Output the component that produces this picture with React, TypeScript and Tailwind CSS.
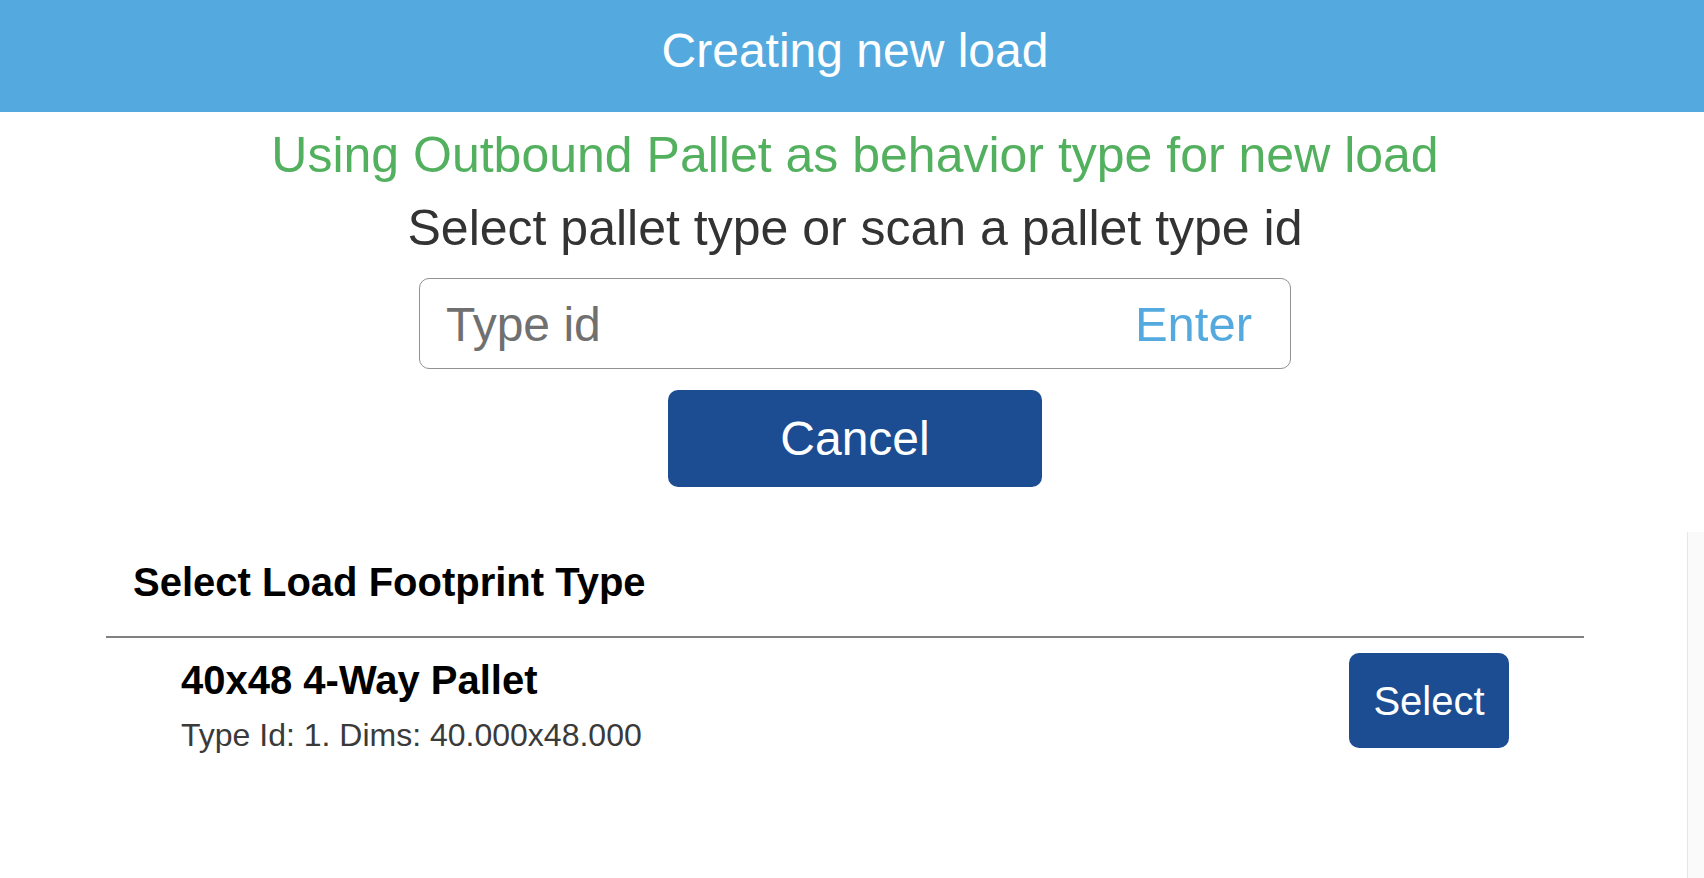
import React from "react";

export default function App() {
  return (
    <div
      className="w-[1704px] h-[878px] bg-white overflow-hidden flex flex-col"
      style={{ fontFamily: '"Liberation Sans", Arial, Helvetica, sans-serif' }}
    >
      <header className="h-[112px] shrink-0 bg-[#54aadf] pl-[6px] pt-[23px]">
        <h1 className="text-center text-white text-[48px] leading-[56px] font-normal">
          Creating new load
        </h1>
      </header>

      <div className="flex flex-col items-center pl-[6px]">
        <p className="mt-[15px] text-[50px] leading-[56px] text-[#53b05f]">
          Using Outbound Pallet as behavior type for new load
        </p>
        <p className="mt-[17px] text-[50px] leading-[56px] text-[#333333]">
          Select pallet type or scan a pallet type id
        </p>
        <div className="mt-[22px] w-[872px] h-[91px] flex items-center rounded-[10px] border-[1.5px] border-[#929292] pl-[26px] pr-[38px]">
          <input
            type="text"
            placeholder="Type id"
            className="flex-1 min-w-0 bg-transparent outline-none text-[48px] leading-[56px] text-[#333] placeholder:text-[#707070] pt-[3px]"
            style={{ fontFamily: '"Liberation Sans", Arial, Helvetica, sans-serif' }}
          />
          <button
            type="button"
            className="text-[49px] leading-[56px] text-[#54aadf] bg-transparent"
            style={{ fontFamily: '"Liberation Sans", Arial, Helvetica, sans-serif' }}
          >
            Enter
          </button>
        </div>
        <button
          type="button"
          className="mt-[21px] w-[374px] h-[97px] rounded-[10px] bg-[#1c4c92] text-white text-[48px] leading-[56px] flex items-center justify-center"
          style={{ fontFamily: '"Liberation Sans", Arial, Helvetica, sans-serif' }}
        >
          <span className="pt-[1px]">Cancel</span>
        </button>
      </div>

      <div className="mt-[45px] flex flex-1 min-h-0">
        <div className="flex-1 pt-[28px] pl-[106px] pr-[103px]">
          <h2 className="pl-[27px] text-[40px] leading-[45px] font-bold text-black">
            Select Load Footprint Type
          </h2>
          <div className="mt-[31px] h-[2px] bg-[#808080]" />
          <div className="flex items-start justify-between pt-[15px] px-[75px]">
            <div className="mt-[4px] flex flex-col">
              <span className="text-[40px] leading-[46px] font-bold text-black">
                40x48 4-Way Pallet
              </span>
              <span className="mt-[14px] text-[32px] leading-[36px] text-[#3a3a3a]">
                Type Id: 1. Dims: 40.000x48.000
              </span>
            </div>
            <button
              type="button"
              className="w-[160px] h-[95px] rounded-[10px] bg-[#1c4c92] text-white text-[40px] leading-[46px] flex items-center justify-center"
              style={{ fontFamily: '"Liberation Sans", Arial, Helvetica, sans-serif' }}
            >
              <span className="pt-[1px]">Select</span>
            </button>
          </div>
        </div>
        <div className="w-[17px] shrink-0 bg-[#fafafa] border-l border-[#e6e6e6]" />
      </div>
    </div>
  );
}
